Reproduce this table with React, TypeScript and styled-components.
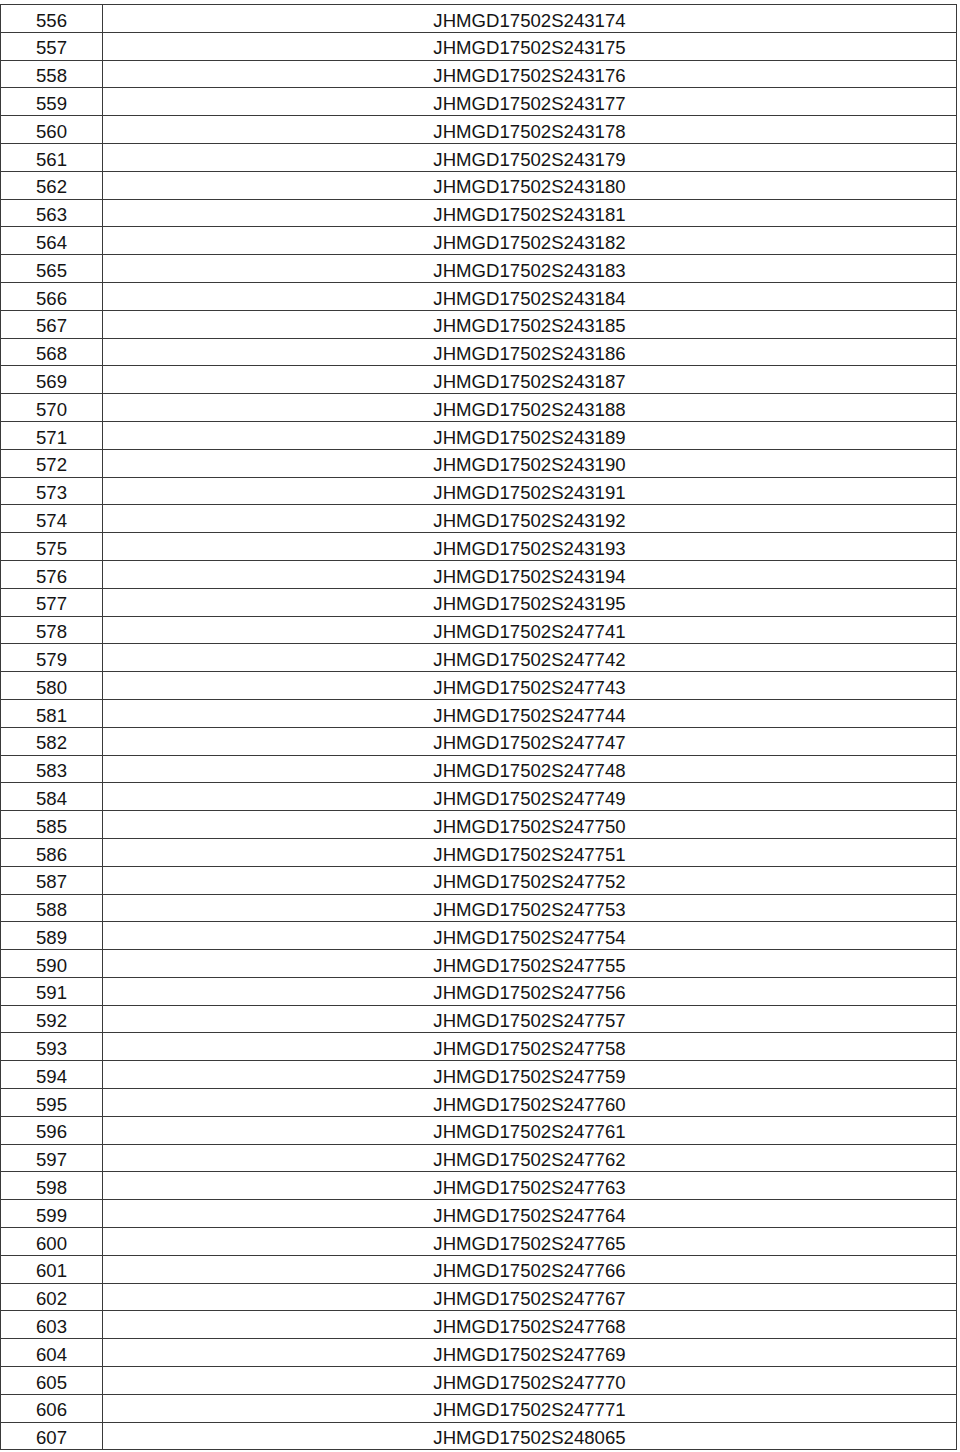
import styled, { createGlobalStyle } from 'styled-components';

const GlobalStyle = createGlobalStyle`
  html, body {
    margin: 0;
    padding: 0;
    background: #ffffff;
  }
  body {
    font-family: "Liberation Sans", Arial, sans-serif;
  }
`;

const START = 556;
const CODES = [
  'JHMGD17502S243174',
  'JHMGD17502S243175',
  'JHMGD17502S243176',
  'JHMGD17502S243177',
  'JHMGD17502S243178',
  'JHMGD17502S243179',
  'JHMGD17502S243180',
  'JHMGD17502S243181',
  'JHMGD17502S243182',
  'JHMGD17502S243183',
  'JHMGD17502S243184',
  'JHMGD17502S243185',
  'JHMGD17502S243186',
  'JHMGD17502S243187',
  'JHMGD17502S243188',
  'JHMGD17502S243189',
  'JHMGD17502S243190',
  'JHMGD17502S243191',
  'JHMGD17502S243192',
  'JHMGD17502S243193',
  'JHMGD17502S243194',
  'JHMGD17502S243195',
  'JHMGD17502S247741',
  'JHMGD17502S247742',
  'JHMGD17502S247743',
  'JHMGD17502S247744',
  'JHMGD17502S247747',
  'JHMGD17502S247748',
  'JHMGD17502S247749',
  'JHMGD17502S247750',
  'JHMGD17502S247751',
  'JHMGD17502S247752',
  'JHMGD17502S247753',
  'JHMGD17502S247754',
  'JHMGD17502S247755',
  'JHMGD17502S247756',
  'JHMGD17502S247757',
  'JHMGD17502S247758',
  'JHMGD17502S247759',
  'JHMGD17502S247760',
  'JHMGD17502S247761',
  'JHMGD17502S247762',
  'JHMGD17502S247763',
  'JHMGD17502S247764',
  'JHMGD17502S247765',
  'JHMGD17502S247766',
  'JHMGD17502S247767',
  'JHMGD17502S247768',
  'JHMGD17502S247769',
  'JHMGD17502S247770',
  'JHMGD17502S247771',
  'JHMGD17502S248065',
];

const Page = styled.div`
  padding-top: 4px;
  width: 960px;
`;

const Table = styled.div`
  width: 957px;
  border-top: 1px solid #3a3a3a;
  border-left: 1px solid #3a3a3a;
  border-right: 1px solid #3a3a3a;
  box-sizing: border-box;
`;

const Row = styled.div`
  display: grid;
  grid-template-columns: 102px 1fr;
  height: 27.81px;
  border-bottom: 1px solid #3a3a3a;
  box-sizing: border-box;
`;

const Cell = styled.div<{ $divider?: boolean }>`
  display: flex;
  align-items: center;
  justify-content: center;
  padding-top: 5px;
  box-sizing: border-box;
  border-right: ${({ $divider }) => ($divider ? '1px solid #3a3a3a' : 'none')};
  font-size: 18.6px;
  color: #141414;
  line-height: 1;
`;

const App = () => {
  return (
    <Page>
      <GlobalStyle />
      <Table>
        {CODES.map((code, i) => (
          <Row key={code}>
            <Cell $divider>{START + i}</Cell>
            <Cell>{code}</Cell>
          </Row>
        ))}
      </Table>
    </Page>
  );
};

export default App;
